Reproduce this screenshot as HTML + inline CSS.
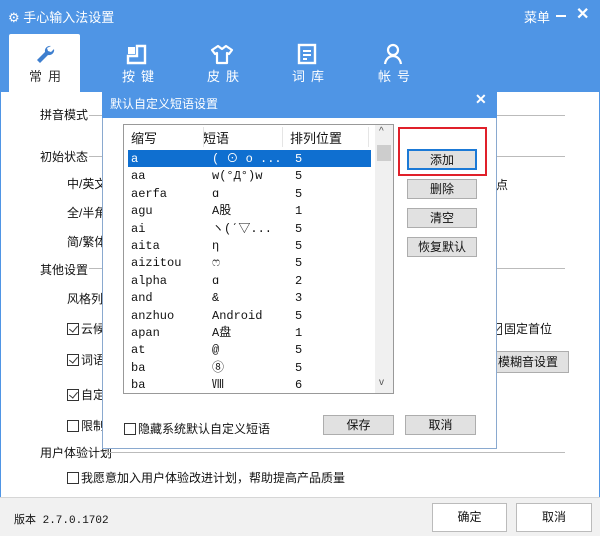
<!DOCTYPE html>
<html><head><meta charset="utf-8"><style>
*{margin:0;padding:0;box-sizing:border-box}
body{width:600px;height:536px;overflow:hidden;position:relative;background:#fff;font-family:"Liberation Sans","Noto Sans CJK SC",sans-serif;font-size:12px;color:#111}
.a{position:absolute;white-space:nowrap}
.hdr{position:absolute;left:0;top:0;width:600px;height:92px;background:#4f95e5}
.side{position:absolute;top:92px;width:1px;height:444px;background:#4f95e5}
.tab{position:absolute;top:66px;color:#fff;font-size:13px;letter-spacing:6px}
.tabact{position:absolute;left:9px;top:34px;width:71px;height:60px;background:#fff;border-radius:2px 2px 0 0}
.btn{position:absolute;background:#e1e1e1;border:1px solid #adadad;text-align:center;font-size:12px}
.cb{display:inline-block;width:12px;height:12px;border:1px solid #333;vertical-align:-2px;margin-right:2px;background:#fff;position:relative}
.cb.on::after{content:"";position:absolute;left:3px;top:0px;width:4px;height:7px;border:solid #333;border-width:0 1.5px 1.5px 0;transform:rotate(40deg)}
.line{position:absolute;height:1px;background:#bbb}
.mono{font-family:"Liberation Mono","Noto Sans CJK SC",monospace;font-size:12px}
</style></head><body>
<div class="hdr"></div>
<div class="side" style="left:0"></div><div class="side" style="left:599px"></div>
<div class="a" style="left:8px;top:7px;color:#fff;font-size:13px">⚙ 手心输入法设置</div>
<div class="a" style="left:524px;top:7px;color:#fff;font-size:13px">菜单</div>
<div class="a" style="left:556px;top:15px;width:10px;height:2px;background:#fff"></div>
<div class="a" style="left:576px;top:4px;color:#fff;font-size:16px;font-weight:bold">✕</div>
<div class="tabact"></div>
<svg class="a" style="left:34px;top:44px" width="22" height="22" viewBox="0 0 22 22"><path d="M17 2a5 5 0 0 0-6 6L3 16l3 3 8-8a5 5 0 0 0 6-6l-3 3-3-1-1-3z" fill="#3e7fcf"/></svg>
<div class="tab" style="left:29px;color:#333">常用</div>
<svg class="a" style="left:125px;top:44px" width="24" height="22" viewBox="0 0 24 22"><rect x="3" y="3" width="7" height="7" fill="#fff"/><path d="M12 2h8v17H3v-7h9z" fill="none" stroke="#fff" stroke-width="2.4"/></svg>
<div class="tab" style="left:122px">按键</div>
<svg class="a" style="left:210px;top:43px" width="24" height="22" viewBox="0 0 24 22"><path d="M8 3l4 3 4-3 6 4-3 4-2-1v10H7V10l-2 1-3-4z" fill="none" stroke="#fff" stroke-width="2.2" stroke-linejoin="round"/></svg>
<div class="tab" style="left:207px">皮肤</div>
<svg class="a" style="left:296px;top:43px" width="22" height="22" viewBox="0 0 22 22"><rect x="3" y="2" width="16" height="18" fill="none" stroke="#fff" stroke-width="2.4"/><path d="M7 8h8M7 12h8M7 16h4" stroke="#fff" stroke-width="2"/></svg>
<div class="tab" style="left:292px">词库</div>
<svg class="a" style="left:382px;top:42px" width="22" height="24" viewBox="0 0 22 24"><circle cx="11" cy="8" r="5" fill="none" stroke="#fff" stroke-width="2.2"/><path d="M3 22c1-6 5-8 8-8s7 2 8 8" fill="none" stroke="#fff" stroke-width="2.2"/></svg>
<div class="tab" style="left:378px">帐号</div>

<div class="a" style="left:40px;top:106px">拼音模式</div><div class="line" style="left:89px;top:115px;width:476px"></div>
<div class="a" style="left:40px;top:148px">初始状态</div><div class="line" style="left:89px;top:156px;width:476px"></div>
<div class="a" style="left:67px;top:175px">中/英文</div><div class="a" style="left:496px;top:176px">点</div>
<div class="a" style="left:67px;top:204px">全/半角</div>
<div class="a" style="left:67px;top:233px">简/繁体</div>
<div class="a" style="left:40px;top:261px">其他设置</div><div class="line" style="left:89px;top:268px;width:476px"></div>
<div class="a" style="left:67px;top:290px">风格列</div>
<div class="a" style="left:67px;top:320px"><span class="cb on"></span>云候</div>
<div class="a" style="left:490px;top:320px"><span class="cb on"></span>固定首位</div>
<div class="a" style="left:67px;top:351px"><span class="cb on"></span>词语</div>
<div class="btn" style="left:487px;top:351px;width:82px;height:22px;line-height:20px">模糊音设置</div>
<div class="a" style="left:67px;top:386px"><span class="cb on"></span>自定</div>
<div class="a" style="left:67px;top:417px"><span class="cb"></span>限制</div>
<div class="a" style="left:40px;top:444px">用户体验计划</div><div class="line" style="left:102px;top:452px;width:463px"></div>
<div class="a" style="left:67px;top:469px"><span class="cb"></span>我愿意加入用户体验改进计划，帮助提高产品质量</div>

<div class="a" style="left:0;top:497px;width:600px;height:39px;background:#f1f1f1;border-top:1px solid #d6d6d6"></div>
<div class="a mono" style="left:14px;top:511px;font-size:11px">版本 2.7.0.1702</div>
<div class="btn" style="left:432px;top:503px;width:75px;height:29px;line-height:27px;background:#fff;border-color:#bbb">确定</div>
<div class="btn" style="left:516px;top:503px;width:76px;height:29px;line-height:27px;background:#fff;border-color:#bbb">取消</div>

<!-- dialog -->
<div class="a" style="left:102px;top:88px;width:395px;height:361px;background:#fff;border:1px solid #8aa9cf"></div>
<div class="a" style="left:102px;top:88px;width:395px;height:30px;background:#4f95e5"></div>
<div class="a" style="left:110px;top:95px;color:#fff;font-size:12px">默认自定义短语设置</div>
<div class="a" style="left:475px;top:91px;color:#fff;font-size:14px;font-weight:bold">✕</div>

<div class="a" style="left:123px;top:124px;width:271px;height:270px;border:1px solid #999;background:#fff;overflow:hidden">
 <div class="a" style="left:7px;top:3px;font-size:13px">缩写</div>
 <div class="a" style="left:79px;top:3px;font-size:13px">短语</div>
 <div class="a" style="left:166px;top:3px;font-size:13px">排列位置</div>
 <div class="a" style="left:79px;top:2px;width:1px;height:20px;background:#e5e5e5"></div>
 <div class="a" style="left:158px;top:2px;width:1px;height:20px;background:#e5e5e5"></div>
 <div class="a" style="left:244px;top:2px;width:1px;height:20px;background:#e5e5e5"></div>
 <div class="a" style="left:4px;top:25px;width:243px;height:17px;background:#0f6fd0"></div>
 <div class="a" style="left:251px;top:0;width:18px;height:268px;background:#f0f0f0"></div>
 <div class="a" style="left:253px;top:20px;width:14px;height:16px;background:#cdcdcd"></div>
 <div class="a" style="left:255px;top:1px;font-size:10px;color:#555">^</div>
 <div class="a" style="left:255px;top:252px;font-size:10px;color:#555">v</div>
 <div class="a mono" style="left:7px;top:26px;line-height:17.4px;color:#111">
 <span style="color:#fff">a</span><br>aa<br>aerfa<br>agu<br>ai<br>aita<br>aizitou<br>alpha<br>and<br>anzhuo<br>apan<br>at<br>ba<br>ba</div>
 <div class="a mono" style="left:88px;top:26px;line-height:17.4px">
 <span style="color:#fff">( ⊙ o ...</span><br>w(°Д°)w<br>ɑ<br>A股<br>ヽ(ˊ▽...<br>η<br>ෆ<br>ɑ<br>&amp;<br>Android<br>A盘<br>@<br>⑧<br>Ⅷ</div>
 <div class="a mono" style="left:171px;top:26px;line-height:17.4px">
 <span style="color:#fff">5</span><br>5<br>5<br>1<br>5<br>5<br>5<br>2<br>3<br>5<br>1<br>5<br>5<br>6</div>
</div>

<div class="a" style="left:398px;top:127px;width:89px;height:49px;border:2px solid #e0202a"></div>
<div class="btn" style="left:407px;top:149px;width:70px;height:21px;line-height:19px;border:2px solid #1b79d6">添加</div>
<div class="btn" style="left:407px;top:179px;width:70px;height:20px;line-height:18px">删除</div>
<div class="btn" style="left:407px;top:208px;width:70px;height:20px;line-height:18px">清空</div>
<div class="btn" style="left:407px;top:237px;width:70px;height:20px;line-height:18px">恢复默认</div>

<div class="a" style="left:124px;top:420px"><span class="cb"></span>隐藏系统默认自定义短语</div>
<div class="btn" style="left:323px;top:415px;width:71px;height:20px;line-height:18px">保存</div>
<div class="btn" style="left:405px;top:415px;width:71px;height:20px;line-height:18px">取消</div>
</body></html>
